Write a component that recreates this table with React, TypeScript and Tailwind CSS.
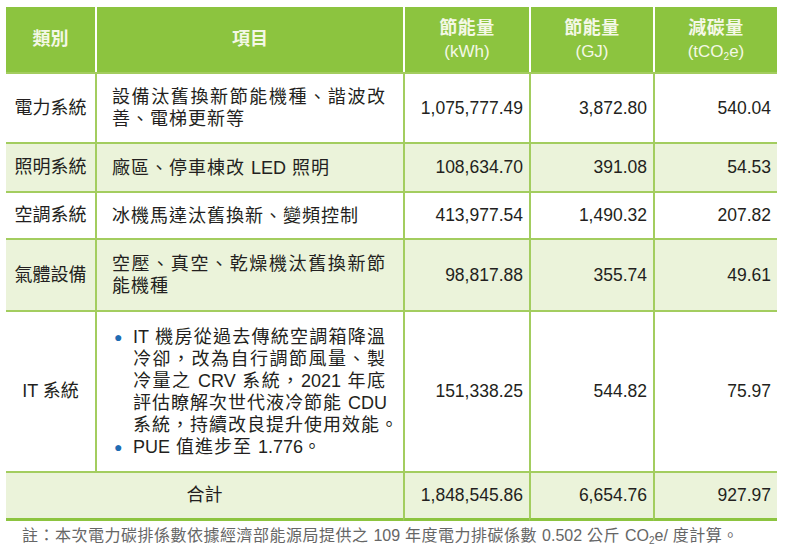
import React from "react";

const font = { fontFamily: '"Liberation Sans", "Noto Sans CJK TC", sans-serif' };

function J({ children }: { children: React.ReactNode }) {
  return <div className="text-justify [text-align-last:justify] whitespace-nowrap">{children}</div>;
}

function L({ children }: { children: React.ReactNode }) {
  return <span className="tracking-normal">{children}</span>;
}

const numCell = "border-l-2 border-t-2 border-[#a3cd5f] text-right pr-[6px] text-[17.5px] align-middle";
const catCell = "border-t-2 border-[#a3cd5f] text-center text-[18px] align-middle";
const itemCell = "border-l-2 border-t-2 border-[#a3cd5f] pl-[15px] pr-[17px] text-[18px] tracking-[1px] leading-[22px] align-middle";

function Bullet({ children }: { children: React.ReactNode }) {
  return (
    <div className="flex">
      <span className="w-[21px] shrink-0 text-[#1f6cb3] text-[14px] leading-[22px] pl-[2px]">●</span>
      <div className="flex-1 min-w-0">{children}</div>
    </div>
  );
}

export default function App() {
  const rows = [
    { cat: "電力系統", item: <><div className="text-justify [text-align-last:justify]">設備汰舊換新節能機種、諧波改</div><div>善、電梯更新等</div></>, a: "1,075,777.49", b: "3,872.80", c: "540.04", h: "h-[70px]", bg: "bg-white" },
    { cat: "照明系統", item: <div>廠區、停車棟改 <L>LED</L> 照明</div>, a: "108,634.70", b: "391.08", c: "54.53", h: "h-[49px]", bg: "bg-[#ebf3da]" },
    { cat: "空調系統", item: <div>冰機馬達汰舊換新、變頻控制</div>, a: "413,977.54", b: "1,490.32", c: "207.82", h: "h-[47px]", bg: "bg-white" },
    { cat: "氣體設備", item: <><div className="text-justify [text-align-last:justify]">空壓、真空、乾燥機汰舊換新節</div><div>能機種</div></>, a: "98,817.88", b: "355.74", c: "49.61", h: "h-[72px]", bg: "bg-[#ebf3da]" },
  ];
  return (
    <div className="w-[787px] h-[555px] bg-white text-[#231f20] pt-[7px] pl-[6px]" style={font}>
      <table className="table-fixed border-separate border-spacing-0 w-[771px]">
        <colgroup>
          <col className="w-[89px]" />
          <col className="w-[308px]" />
          <col className="w-[126px]" />
          <col className="w-[124px]" />
          <col className="w-[124px]" />
        </colgroup>
        <thead>
          <tr className="h-[65px] bg-[#8cc43f] text-[#f4f8e6] leading-[23px]">
            <th className="text-[18px] font-bold align-middle">類別</th>
            <th className="border-l-2 border-white text-[18px] font-bold align-middle">項目</th>
            <th className="border-l-2 border-white align-middle">
              <div className="text-[18px] font-bold tracking-[0.5px]">節能量</div>
              <div className="text-[17px] font-normal">(kWh)</div>
            </th>
            <th className="border-l-2 border-white align-middle">
              <div className="text-[18px] font-bold tracking-[0.5px]">節能量</div>
              <div className="text-[17px] font-normal">(GJ)</div>
            </th>
            <th className="border-l-2 border-white align-middle">
              <div className="text-[18px] font-bold tracking-[0.5px]">減碳量</div>
              <div className="text-[17px] font-normal">(tCO<sub className="text-[10px] align-baseline relative top-[3px]">2</sub>e)</div>
            </th>
          </tr>
        </thead>
        <tbody>
          {rows.map((r) => (
            <tr key={r.cat} className={`${r.h} ${r.bg}`}>
              <td className={catCell}>{r.cat}</td>
              <td className={itemCell}>{r.item}</td>
              <td className={numCell}>{r.a}</td>
              <td className={numCell}>{r.b}</td>
              <td className={numCell}>{r.c}</td>
            </tr>
          ))}
          <tr className="h-[161px] bg-white">
            <td className={catCell}>IT 系統</td>
            <td className={itemCell}>
              <Bullet>
                <J><L>IT</L> 機房從過去傳統空調箱降溫</J>
                <J>冷卻，改為自行調節風量、製</J>
                <J>冷量之 <L>CRV</L> 系統，<L>2021</L> 年底</J>
                <J>評估瞭解次世代液冷節能 <L>CDU</L></J>
                <J>系統，持續改良提升使用效能。</J>
              </Bullet>
              <Bullet>
                <div><L>PUE</L> 值進步至 <L>1.776</L>。</div>
              </Bullet>
            </td>
            <td className={numCell}>151,338.25</td>
            <td className={numCell}>544.82</td>
            <td className={numCell}>75.97</td>
          </tr>
          <tr className="h-[50px] bg-[#ebf3da]">
            <td colSpan={2} className="border-t-2 border-b-[3px] border-[#a3cd5f] border-b-[#8cc43f] text-center text-[18px] align-middle">合計</td>
            <td className={`${numCell} border-b-[3px] border-b-[#8cc43f]`}>1,848,545.86</td>
            <td className={`${numCell} border-b-[3px] border-b-[#8cc43f]`}>6,654.76</td>
            <td className={`${numCell} border-b-[3px] border-b-[#8cc43f]`}>927.97</td>
          </tr>
        </tbody>
      </table>
      <div className="pl-[16px] pt-[4px] text-[16px] leading-[22px] tracking-[0.5px] text-[#666666] whitespace-nowrap">
        註：本次電力碳排係數依據經濟部能源局提供之 <span className="tracking-normal">109</span> 年度電力排碳係數 <span className="tracking-normal">0.502</span> 公斤 <span className="tracking-normal">CO<sub className="text-[10px] align-baseline relative top-[3px]">2</sub>e/</span> 度計算。
      </div>
    </div>
  );
}
